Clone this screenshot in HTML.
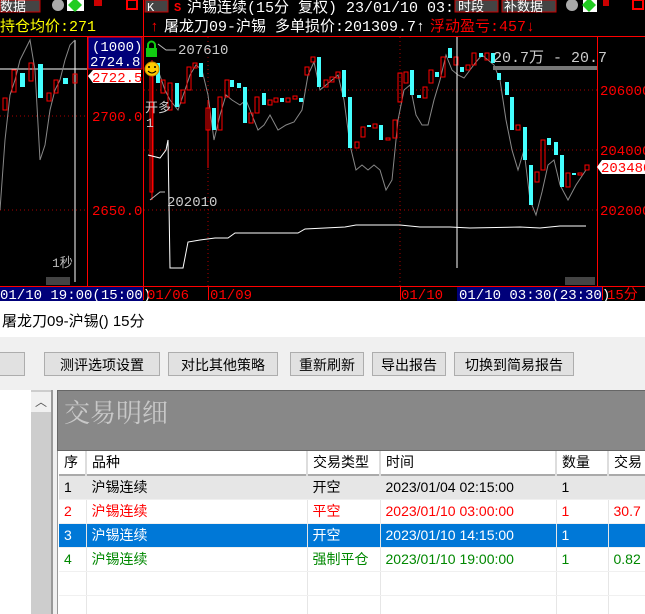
<!DOCTYPE html><html style="height:614px;overflow:hidden"><head><meta charset="utf-8"><style>
body{margin:0;width:645px;height:614px;overflow:hidden;background:#f0f0f0;font-family:"Liberation Sans","Noto Sans CJK SC",sans-serif;position:relative}
.a{position:absolute;white-space:nowrap}
.btn{position:absolute;top:352px;height:24px;border:1px solid #adadad;background:#e1e1e1;font-size:14px;line-height:24px;text-align:center;box-sizing:border-box;color:#000}
table{border-collapse:collapse;font-size:14px;table-layout:fixed}
td{height:23px;padding:0 0 0 5px;border-right:1px solid #e6e6e6;border-bottom:1px solid #f0f0f0;white-space:nowrap;overflow:hidden;line-height:23px}
</style></head><body>
<svg class="a" style="left:0;top:0" width="645" height="301" font-family="Liberation Mono,Noto Sans CJK SC,monospace">
<rect width="645" height="301" fill="#000"/>
<rect x="0" y="0" width="40" height="12" fill="#444" stroke="#c00"/><text x="0" y="11" fill="#fff" font-size="13">数据</text>
<circle cx="58" cy="5" r="6" fill="#aaa"/><rect x="67" y="0" width="17" height="11" fill="#fff"/><polygon points="75,-2 82,5 75,12 68,5" fill="#2c2"/>
<rect x="94" y="0" width="8" height="6" fill="#c00"/><rect x="127" y="0" width="10" height="9" fill="none" stroke="#f00" stroke-width="2"/>
<rect x="145" y="0" width="23" height="12" fill="#444" stroke="#c00"/><text x="147" y="11" fill="#fff" font-size="12">K</text><text x="174" y="11" fill="#f00" font-size="12" font-weight="bold">S</text>
<text x="187" y="12" fill="#fff" font-size="15">沪锡连续(15分 复权) 23/01/10 03:30</text>
<rect x="455" y="0" width="43" height="12" fill="#444" stroke="#c00"/><text x="458" y="11" fill="#fff" font-size="13">时段</text>
<rect x="502" y="0" width="54" height="12" fill="#444" stroke="#c00"/><text x="504" y="11" fill="#fff" font-size="13">补数据</text>
<circle cx="572" cy="5" r="6" fill="#aaa"/><rect x="583" y="0" width="14" height="12" fill="#fff"/><polygon points="589,-2 596,5 589,12 582,5" fill="#2c2"/>
<rect x="603" y="0" width="6" height="6" fill="#c00"/><rect x="633" y="0" width="10" height="9" fill="none" stroke="#f00" stroke-width="2"/>
<text x="0" y="31" fill="#ff0" font-size="15">持仓均价:271</text>
<text x="150" y="31" fill="#f00" font-size="15">↑</text><text x="164" y="31" fill="#fff" font-size="15">屠龙刀09-沪锡 多单损价:201309.7↑</text>
<text x="430" y="31" fill="#f00" font-size="15">浮动盈亏:457↓</text>
<line x1="87.5" y1="37" x2="87.5" y2="286" stroke="#f00"/><line x1="143.5" y1="0" x2="143.5" y2="300" stroke="#f00"/><line x1="597.5" y1="37" x2="597.5" y2="286" stroke="#f00"/>
<line x1="0" y1="36.5" x2="645" y2="36.5" stroke="#f00"/>
<g stroke="#a00" stroke-dasharray="1,3"><line x1="0" y1="116" x2="87" y2="116"/><line x1="0" y1="210" x2="87" y2="210"/><line x1="144" y1="90" x2="597" y2="90"/><line x1="144" y1="150" x2="597" y2="150"/><line x1="144" y1="210" x2="597" y2="210"/><line x1="208" y1="37" x2="208" y2="286"/><line x1="400" y1="37" x2="400" y2="286"/></g>
<rect x="88" y="37" width="54" height="32" fill="#00007a" stroke="#f00"/>
<text x="92" y="51" fill="#fff" font-size="14">(1000)</text><text x="90" y="66" fill="#fff" font-size="14">2724.8</text>
<polygon points="88,76 93,70 141,70 141,83 93,83" fill="#fff"/><text x="92" y="82" fill="#f00" font-size="14">2722.5</text>
<text x="92" y="121" fill="#f00" font-size="14">2700.0</text><text x="92" y="215" fill="#f00" font-size="14">2650.0</text>
<text x="600" y="95" fill="#f00" font-size="14">206000</text><text x="600" y="155" fill="#f00" font-size="14">204000</text><text x="600" y="215" fill="#f00" font-size="14">202000</text>
<polygon points="597,167 602,160 645,160 645,174 602,174" fill="#fff"/><text x="601" y="172" fill="#f00" font-size="14">203480</text>
<line x1="0" y1="69" x2="87" y2="69" stroke="#fff"/><line x1="75" y1="40" x2="75" y2="282" stroke="#fff"/>
<polyline points="0,210 5,140 10,95 15,80 20,60 25,50 30,40 35,70 40,160 45,145 50,110 55,90 60,80 65,60 70,45 75,40" fill="none" stroke="#888"/>
<g fill="none" stroke="#f00"><rect x="3" y="98" width="4" height="12"/><rect x="12" y="70" width="4" height="22"/><rect x="29" y="63" width="4" height="18"/><rect x="47" y="93" width="4" height="8"/><rect x="54" y="80" width="4" height="13"/><rect x="73" y="74" width="4" height="9"/></g>
<g fill="#4ff"><rect x="20" y="73" width="5" height="14"/><rect x="38" y="64" width="5" height="34"/><rect x="63" y="78" width="5" height="6"/></g>
<text x="52" y="267" fill="#bbb" font-size="13">1秒</text>
<rect x="46" y="277" width="24" height="8" fill="#444"/>
<polyline points="152,75 158,70 165,90 170,100 178,110 185,90 190,75 196,65 202,70 208,95 214,140 220,115 226,95 232,100 240,105 246,100 252,115 258,130 264,125 270,115 278,130 286,125 294,122 302,110 308,75 314,62 320,90 326,85 332,80 338,75 344,100 350,145 356,170 362,165 368,170 374,165 380,170 386,190 392,180 398,120 404,90 410,85 416,115 422,125 428,125 434,100 440,80 446,55 452,70 458,75 464,78 470,70 476,62 482,55 488,60 494,65 500,80 506,120 512,150 518,170 524,150 530,200 536,215 542,192 548,165 554,160 560,185 568,200 576,185 586,170" fill="none" stroke="#888"/>
<g stroke="#f00" fill="none">
<line x1="152" y1="60" x2="152" y2="200"/><rect x="150" y="70" width="3" height="122"/>
<rect x="161" y="80" width="4" height="13"/><rect x="168" y="83" width="4" height="27"/><rect x="181" y="90" width="4" height="13"/><rect x="187" y="67" width="4" height="23"/><rect x="193" y="63" width="4" height="5"/>
<line x1="208" y1="100" x2="208" y2="168"/><rect x="206" y="108" width="4" height="22"/><rect x="218" y="97" width="4" height="33"/><rect x="225" y="80" width="4" height="17"/>
<rect x="249" y="113" width="4" height="10"/><rect x="255" y="97" width="4" height="16"/><rect x="268" y="100" width="4" height="5"/><rect x="274" y="98" width="4" height="4"/><rect x="286" y="98" width="4" height="4"/><rect x="293" y="96" width="4" height="3"/>
<rect x="305" y="67" width="4" height="8"/><rect x="311" y="57" width="4" height="5"/><rect x="324" y="80" width="4" height="7"/><rect x="330" y="77" width="4" height="5"/><rect x="336" y="72" width="4" height="6"/>
<rect x="355" y="142" width="4" height="6"/><rect x="361" y="127" width="4" height="10"/><rect x="373" y="124" width="4" height="4"/><rect x="386" y="138" width="4" height="2"/><rect x="393" y="120" width="4" height="18"/>
<rect x="398" y="73" width="4" height="29"/><rect x="404" y="72" width="4" height="11"/><rect x="423" y="87" width="4" height="11"/><rect x="429" y="70" width="4" height="13"/><rect x="441" y="57" width="4" height="20"/>
<rect x="454" y="57" width="4" height="8"/><rect x="466" y="65" width="4" height="5"/><rect x="472" y="53" width="4" height="12"/><rect x="485" y="53" width="4" height="7"/>
<rect x="516" y="125" width="4" height="5"/><rect x="535" y="172" width="4" height="10"/><rect x="541" y="140" width="4" height="30"/><rect x="566" y="173" width="4" height="14"/><rect x="578" y="173" width="4" height="2"/><rect x="585" y="165" width="4" height="5"/>
</g>
<g fill="#4ff">
<rect x="156" y="63" width="4" height="20"/><rect x="175" y="83" width="4" height="24"/><rect x="199" y="63" width="4" height="14"/><rect x="212" y="108" width="4" height="22"/><rect x="230" y="80" width="4" height="7"/><rect x="237" y="83" width="4" height="5"/><rect x="243" y="87" width="4" height="36"/>
<rect x="262" y="93" width="4" height="12"/><rect x="280" y="98" width="4" height="4"/><rect x="299" y="98" width="4" height="4"/><rect x="317" y="57" width="4" height="30"/><rect x="342" y="70" width="4" height="27"/><rect x="348" y="97" width="4" height="51"/>
<rect x="367" y="125" width="4" height="2"/><rect x="379" y="125" width="4" height="15"/><rect x="410" y="70" width="4" height="25"/><rect x="417" y="95" width="4" height="3"/><rect x="435" y="72" width="4" height="5"/><rect x="448" y="48" width="4" height="10"/>
<rect x="460" y="67" width="4" height="5"/><rect x="479" y="53" width="4" height="4"/><rect x="491" y="53" width="4" height="10"/><rect x="497" y="73" width="4" height="7"/><rect x="505" y="82" width="4" height="13"/><rect x="510" y="97" width="4" height="33"/>
<rect x="523" y="127" width="4" height="33"/><rect x="529" y="165" width="4" height="40"/><rect x="547" y="138" width="4" height="7"/><rect x="554" y="142" width="4" height="13"/><rect x="560" y="155" width="4" height="32"/><rect x="572" y="173" width="4" height="2"/>
</g>
<line x1="457" y1="37" x2="457" y2="268" stroke="#fff"/>
<polyline points="148,155 160,158 166,150 168,140 170,268 183,268 188,242 200,240 215,238 228,238 235,233 262,233 298,233 305,229 325,228 345,227 356,225 400,225 420,227 450,227 470,228 520,227 540,228 560,226 586,226" fill="none" stroke="#fff"/>
<polyline points="150,200 160,192 165,192" fill="none" stroke="#bbb"/><text x="167" y="206" fill="#ccc" font-size="14">202010</text>
<polyline points="158,44 166,50 176,50" fill="none" stroke="#bbb"/><text x="178" y="54" fill="#ccc" font-size="14">207610</text>
<rect x="146" y="48" width="11" height="9" fill="#1c1" /><path d="M148,48 v-3 a3.5,3.5 0 0 1 7,0 v3" fill="none" stroke="#1c1" stroke-width="2"/>
<circle cx="152" cy="69" r="7" fill="#fc0" stroke="#c80"/><circle cx="149" cy="67" r="1" fill="#000"/><circle cx="155" cy="67" r="1" fill="#000"/><path d="M148,71 q4,4 8,0" stroke="#000" fill="none"/>
<text x="145" y="112" fill="#ccc" font-size="13">开多</text><text x="146" y="127" fill="#ccc" font-size="13">1</text>
<text x="493" y="62" fill="#ccc" font-size="15">20.7万 - 20.7</text><rect x="493" y="66" width="104" height="4" fill="#777"/>
<rect x="565" y="277" width="30" height="8" fill="#444"/>
<line x1="0" y1="286.5" x2="645" y2="286.5" stroke="#f00"/>
<rect x="0" y="287" width="143" height="14" fill="#00007a"/><text x="0" y="299" fill="#fff" font-size="14">01/10 19:00(15:00)</text>
<text x="147" y="299" fill="#f00" font-size="14">01/06</text><text x="210" y="299" fill="#f00" font-size="14">01/09</text><text x="401" y="299" fill="#f00" font-size="14">01/10</text>
<line x1="208.5" y1="287" x2="208.5" y2="300" stroke="#f00"/><line x1="400.5" y1="287" x2="400.5" y2="300" stroke="#f00"/>
<rect x="457" y="287" width="145" height="14" fill="#00007a"/><text x="459" y="299" fill="#fff" font-size="14">01/10 03:30(23:30)</text>
<line x1="602.5" y1="287" x2="602.5" y2="300" stroke="#f00"/><text x="607" y="299" fill="#f00" font-size="14">15分</text>
</svg>
<div class="a" style="left:0;top:301px;width:645px;height:36px;background:#fff"></div>
<div class="a" style="left:2px;top:310px;font-size:15px">屠龙刀09-沪锡() 15分</div>
<div class="a" style="left:-1px;top:352px;width:26px;height:24px;border:1px solid #adadad;background:#e1e1e1;box-sizing:border-box"></div>
<div class="btn" style="left:44px;width:116px">测评选项设置</div>
<div class="btn" style="left:168px;width:110px">对比其他策略</div>
<div class="btn" style="left:290px;width:74px">重新刷新</div>
<div class="btn" style="left:372px;width:74px">导出报告</div>
<div class="btn" style="left:454px;width:120px">切换到简易报告</div>
<div class="a" style="left:0;top:390px;width:31px;height:224px;background:#fff"></div>
<div class="a" style="left:31px;top:390px;width:20px;height:224px;background:#cdcdcd"></div>
<div class="a" style="left:31px;top:392px;width:20px;height:20px;background:#f0f0f0;font-size:12px;text-align:center;line-height:20px;color:#555">︿</div>
<div class="a" style="left:51px;top:390px;width:2px;height:224px;background:#999"></div>
<div class="a" style="left:57px;top:390px;width:590px;height:61px;background:#888;border:1px solid #666;box-sizing:border-box"></div>
<div class="a" style="left:64px;top:393px;font-size:26px;color:#c8c8c8;font-family:'Liberation Serif','Noto Serif CJK SC',serif">交易明细</div>
<div class="a" style="left:57px;top:451px;width:588px;height:163px;background:#fff;border-left:1px solid #999"></div>
<table class="a" style="left:59px;top:451px;width:620px">
<colgroup><col style="width:27px"><col style="width:221px"><col style="width:73px"><col style="width:176px"><col style="width:52px"><col style="width:71px"></colgroup>
<tr style="background:#fff;border-bottom:2px solid #aaa"><td style="border-right:2px solid #ddd">序</td><td style="border-right:2px solid #ddd">品种</td><td style="border-right:2px solid #ddd">交易类型</td><td style="border-right:2px solid #ddd">时间</td><td style="border-right:2px solid #ddd">数量</td><td>交易</td></tr>
<tr style="background:#e6e6e6"><td>1</td><td>沪锡连续</td><td>开空</td><td>2023/01/04 02:15:00</td><td>1</td><td></td></tr>
<tr style="color:#f00"><td>2</td><td>沪锡连续</td><td>平空</td><td>2023/01/10 03:00:00</td><td>1</td><td>30.7</td></tr>
<tr style="background:#0078d7;color:#fff"><td>3</td><td>沪锡连续</td><td>开空</td><td>2023/01/10 14:15:00</td><td>1</td><td></td></tr>
<tr style="color:#080"><td>4</td><td>沪锡连续</td><td>强制平仓</td><td>2023/01/10 19:00:00</td><td>1</td><td>0.82</td></tr>
<tr><td></td><td></td><td></td><td></td><td></td><td></td></tr>
<tr><td></td><td></td><td></td><td></td><td></td><td></td></tr>
</table>
</body></html>
